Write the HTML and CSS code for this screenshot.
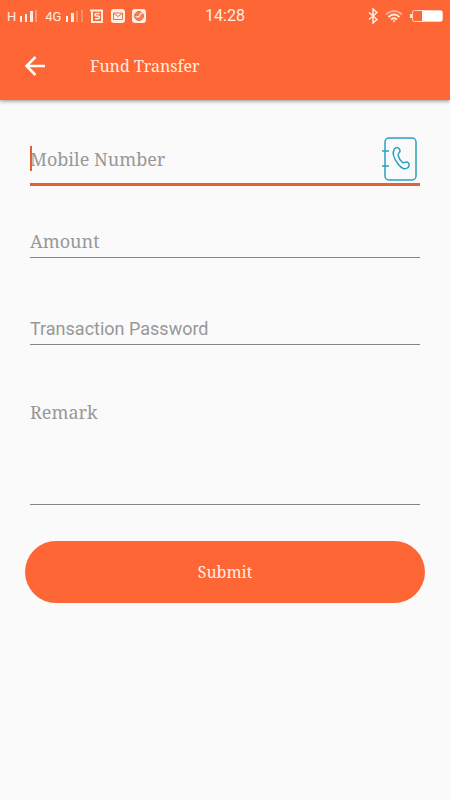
FILE: index.html
```html
<!DOCTYPE html>
<html lang="en">
<head>
<meta charset="utf-8">
<meta name="viewport" content="width=device-width, initial-scale=1">
<title>Fund Transfer</title>
<link rel="stylesheet" href="styles.css">
</head>
<body>
<header class="top">
  <div class="status">
    <div class="status-side">
      <span class="net">H</span>
      <svg class="signal" width="18" height="14" viewBox="0 0 18 14" fill="currentColor" aria-hidden="true"><path d="M0 7h2v6H0zM5 5h2v8H5zM10 2h3v11h-3z"/><path opacity=".35" d="M15 1h2v12h-2z"/></svg>
      <span class="net">4G</span>
      <svg class="signal" width="18" height="14" viewBox="0 0 18 14" fill="currentColor" aria-hidden="true"><path d="M1 7h2v6H1zM6 4h3v9H6z"/><path opacity=".3" d="M11 2h2v11h-2zM16 1h2v12h-2z"/></svg>
      <svg class="app" width="14" height="14" viewBox="0 0 14 14" fill="none" stroke="currentColor" aria-hidden="true"><path stroke-width="2" d="M0 1.500h12V13H2V2"/><path stroke-width="1.500" d="M9.500 4.500H6.500Q5 4.500 5 5.750T6.500 7H8Q9.500 7 9.500 8.300T8 9.800H5"/></svg>
      <svg class="app" width="14" height="14" viewBox="0 0 14 14" aria-hidden="true"><rect width="14" height="14" rx="3" fill="currentColor"/><path d="M2.500 4h9v6.500h-9zM3 4.500l4 3 4-3" fill="none" stroke="#e07850"/></svg>
      <svg class="app" width="14" height="14" viewBox="0 0 14 14" aria-hidden="true"><rect width="14" height="14" rx="3" fill="currentColor"/><circle cx="7" cy="7" r="4.500" fill="#f0825a" stroke="#e07048"/><path d="M3.500 7.500q4 1 4.500-1.500t3-2" fill="none" stroke="#ffeee2" stroke-width="1.200"/></svg>
    </div>
    <time class="clock">14:28</time>
    <div class="status-side status-right">
      <svg width="10" height="16" viewBox="0 0 10 16" fill="none" stroke="currentColor" stroke-width="1.500" aria-hidden="true"><path d="M1 4.500l8 7-4 3.500V1l4 3.500-8 7"/></svg>
      <svg width="18" height="14" viewBox="0 0 18 14" fill="none" stroke="currentColor" stroke-width="1.700" aria-hidden="true"><path opacity=".5" d="M1 5.500Q9-1.500 17 5.500"/><path d="M3.500 8Q9 3 14.500 8M6 10.500Q9 8 12 10.500"/><path d="M7.500 11.500h3L9 13.500z" fill="currentColor" stroke="none"/></svg>
      <svg width="33" height="14" viewBox="0 0 33 14" aria-hidden="true"><rect x="2.500" y="1.500" width="30" height="11" rx="2" fill="none" stroke="currentColor" stroke-opacity=".8"/><path d="M0 5h2v4H0z" fill="currentColor"/><path d="M12 2h20v10H12z" fill="#fff"/></svg>
    </div>
  </div>
  <div class="appbar">
    <button class="back" type="button" aria-label="Back">
      <svg width="20" height="20" viewBox="0 0 20 20" fill="none" stroke="currentColor" stroke-width="2.500" aria-hidden="true"><path d="M20 10H2M10.500 1L1.500 10l9 9"/></svg>
    </button>
    <h1 class="title">Fund Transfer</h1>
  </div>
</header>
<main>
  <form class="form">
    <div class="field field-active">
      <input class="input" type="tel" placeholder="Mobile Number" aria-label="Mobile Number">
      <span class="caret"></span>
      <button class="contacts" type="button" aria-label="Choose from contacts">
        <svg width="36" height="44" viewBox="0 0 36 44" fill="none" stroke="#2a9fc4" stroke-width="1.500" aria-hidden="true"><rect x="4" y="1" width="31" height="42" rx="4"/><path d="M1 14h7M1 29h7"/><path d="M13.500 12C15.500 9.500 18.500 10.500 19 13.500C19.300 15.500 16.500 16.500 17.200 18.500C18 21.500 19.500 24 21.500 25.500C23.500 26.500 24 24.500 26 25C28.500 26 28.800 28.500 27 30.500C24 33 20.500 31.500 17.500 27.500C14 23 10.500 16 13.500 12Z"/></svg>
      </button>
    </div>
    <div class="field"><input class="input" type="text" inputmode="decimal" placeholder="Amount" aria-label="Amount"></div>
    <div class="field"><input class="input input-sans" type="password" placeholder="Transaction Password" aria-label="Transaction Password"></div>
    <div class="field"><textarea class="input input-area" placeholder="Remark" aria-label="Remark"></textarea></div>
    <button class="submit" type="submit">Submit</button>
  </form>
</main>
</body>
</html>
```
FILE: styles.css
```css
* { box-sizing: border-box; }

body {
  margin: 0;
  min-height: 100vh;
  background: #fafafa;
  font-family: "Noto Serif", "DejaVu Serif Condensed", "Liberation Serif", serif;
}

button {
  border: 0;
  padding: 0;
  background: none;
  color: inherit;
  font-family: inherit;
  cursor: pointer;
}

svg { display: block; flex: none; }

.top {
  background: #ff6635;
  color: #ffeee2;
  box-shadow: 0 1px 4px rgba(0, 0, 0, 0.45);
}

.status {
  display: grid;
  grid-template-columns: 1fr auto 1fr;
  align-items: center;
  height: 32px;
  padding: 0 7px;
  font-family: Roboto, sans-serif;
}

.status-side { display: flex; align-items: center; }
.status-right { justify-content: flex-end; gap: 7px; }
.net { margin-right: 4px; padding-top: 2px; font-size: 13px; line-height: 16px; }
.signal { margin-right: 7px; }
.app { margin-right: 7px; }
.clock { font-size: 16px; line-height: 32px; }

.appbar {
  display: flex;
  align-items: center;
  gap: 45px;
  height: 68px;
  padding: 0 25px;
}

.back { color: #fff; }
.title { margin: 0; font-size: 16px; font-weight: 400; line-height: 24px; }

.form {
  display: flex;
  flex-direction: column;
  padding: 35px 25px;
}

.field {
  position: relative;
  display: flex;
  margin: 0 5px 36px;
  padding-top: 18px;
  border-bottom: 1px solid #858585;
}

.field-active {
  margin-bottom: 21px;
  padding-top: 0;
  border-bottom: 3px solid #e35f35;
}

.input {
  flex: 1;
  min-width: 0;
  height: 32px;
  margin: 0;
  padding: 0;
  border: 0;
  outline: 0;
  background: none;
  color: #333;
  font-family: inherit;
  font-size: 18px;
  line-height: 26px;
}

.input::placeholder { color: #989898; opacity: 1; }
.field-active .input { height: 48px; }
.input-sans { font-family: Roboto, sans-serif; }

.input-area {
  height: 105px;
  resize: none;
}

.caret {
  position: absolute;
  left: 0;
  top: 11px;
  width: 2px;
  height: 25px;
  background: #e35f35;
}

.contacts { align-self: center; margin-right: 3px; }

.submit {
  height: 62px;
  border-radius: 31px;
  background: #ff6635;
  color: #ffeee2;
  font-size: 16px;
}
```
